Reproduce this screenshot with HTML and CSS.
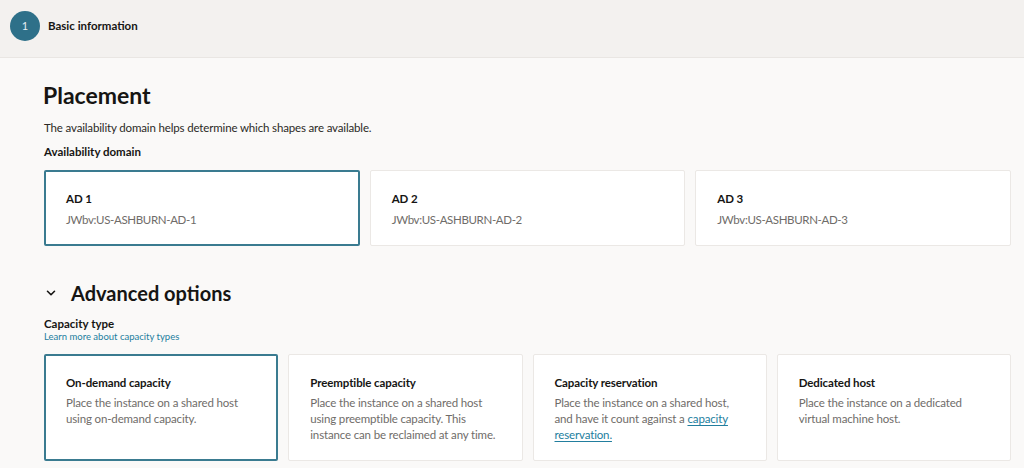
FILE: index.html
```html
<!DOCTYPE html>
<html lang="en">
<head>
<meta charset="utf-8">
<title>Create compute instance</title>
<link rel="stylesheet" href="styles.css">
</head>
<body>
<header class="steps">
  <span class="step-num">1</span>
  <span class="step-label">Basic information</span>
</header>
<main class="content">
  <h1 class="section-title">Placement</h1>
  <p class="section-desc">The availability domain helps determine which shapes are available.</p>
  <div class="field-label">Availability domain</div>
  <div class="ad-grid">
    <div class="tile selected">
      <div class="tile-title">AD 1</div>
      <div class="tile-sub">JWbv:US-ASHBURN-AD-1</div>
    </div>
    <div class="tile">
      <div class="tile-title">AD 2</div>
      <div class="tile-sub">JWbv:US-ASHBURN-AD-2</div>
    </div>
    <div class="tile">
      <div class="tile-title">AD 3</div>
      <div class="tile-sub">JWbv:US-ASHBURN-AD-3</div>
    </div>
  </div>

  <div class="adv-head">
    <svg class="chevron" width="12" height="12" viewBox="0 0 12 12" aria-hidden="true">
      <path d="M2.5 4.25 L6 7.75 L9.5 4.25" fill="none" stroke="#161513" stroke-width="1.6" stroke-linecap="round" stroke-linejoin="round"/>
    </svg>
    <h2 class="adv-title">Advanced options</h2>
  </div>
  <div class="field-label cap-label">Capacity type</div>
  <a class="learn" href="#">Learn more about capacity types</a>
  <div class="cap-grid">
    <div class="tile cap selected">
      <div class="tile-title">On-demand capacity</div>
      <div class="tile-desc">Place the instance on a shared host using on-demand capacity.</div>
    </div>
    <div class="tile cap">
      <div class="tile-title">Preemptible capacity</div>
      <div class="tile-desc">Place the instance on a shared host using preemptible capacity. This instance can be reclaimed at any time.</div>
    </div>
    <div class="tile cap">
      <div class="tile-title">Capacity reservation</div>
      <div class="tile-desc">Place the instance on a shared host, and have it count against a <a class="inline-link" href="#">capacity reservation.</a></div>
    </div>
    <div class="tile cap">
      <div class="tile-title">Dedicated host</div>
      <div class="tile-desc">Place the instance on a dedicated virtual machine host.</div>
    </div>
  </div>
</main>
</body>
</html>
```
FILE: styles.css
```css
* { box-sizing: border-box; }
html, body { margin: 0; padding: 0; }
body {
  background: #faf9f8;
  font-family: "Lato", "Noto Sans", sans-serif;
  color: #161513;
  width: 1024px;
  height: 468px;
  overflow: hidden;
}
.steps {
  height: 58px;
  background: #f3f1ef;
  border-bottom: 1px solid #e9e6e3;
  display: flex;
  align-items: center;
  padding-left: 10px;
  padding-bottom: 6px;
  gap: 8px;
}
.step-num {
  width: 30px;
  height: 30px;
  border-radius: 50%;
  background: #2e7089;
  color: #e6eef2;
  font-size: 11px;
  display: flex;
  align-items: center;
  justify-content: center;
}
.step-label {
  font-size: 11.5px;
  font-weight: 700;
}
.content {
  padding: 22px 13px 0 44px;
}
.section-title {
  margin: 0 0 0 -1px;
  font-size: 23px;
  font-weight: 700;
  line-height: 30px;
}
.section-desc {
  margin: 10px 0 0;
  font-size: 11.5px;
  letter-spacing: -0.15px;
  line-height: 16px;
  color: #2b2926;
}
.field-label {
  margin-top: 8px;
  font-size: 11.5px;
  font-weight: 700;
  line-height: 15px;
}
.ad-grid {
  display: grid;
  grid-template-columns: repeat(3, 1fr);
  gap: 10px;
  margin-top: 11px;
}
.tile {
  background: #fff;
  border: 1px solid #ebe8e5;
  border-radius: 2px;
  padding: 20px 21px;
  height: 76px;
}
.tile.selected {
  border: 2px solid #3a7b90;
  padding: 19px 20px;
}
.tile-title {
  font-size: 11.5px;
  font-weight: 700;
  letter-spacing: -0.1px;
  line-height: 16px;
}
.tile-sub {
  margin-top: 5px;
  font-size: 11.5px;
  letter-spacing: -0.35px;
  line-height: 16px;
  color: #6f6c69;
}
.adv-head {
  display: flex;
  align-items: center;
  gap: 14px;
  margin-top: 34px;
  margin-left: 1px;
}
.adv-title {
  margin: 0;
  font-size: 20px;
  font-weight: 700;
  line-height: 26px;
}
.cap-label { margin-top: 10px; }
.learn {
  display: block;
  font-size: 9.5px;
  line-height: 12px;
  color: #227e9e;
  text-decoration: none;
}
.cap-grid {
  display: grid;
  grid-template-columns: repeat(4, 1fr);
  gap: 10px;
  margin-top: 11px;
}
.tile.cap { height: 107px; padding-top: 20px; }
.tile.cap.selected { padding-top: 19px; }
.tile-desc {
  margin-top: 4px;
  font-size: 11.5px;
  letter-spacing: -0.15px;
  line-height: 16px;
  color: #6f6c69;
}
.inline-link {
  color: #227e9e;
  text-decoration: underline;
  text-underline-offset: 2px;
}
```
